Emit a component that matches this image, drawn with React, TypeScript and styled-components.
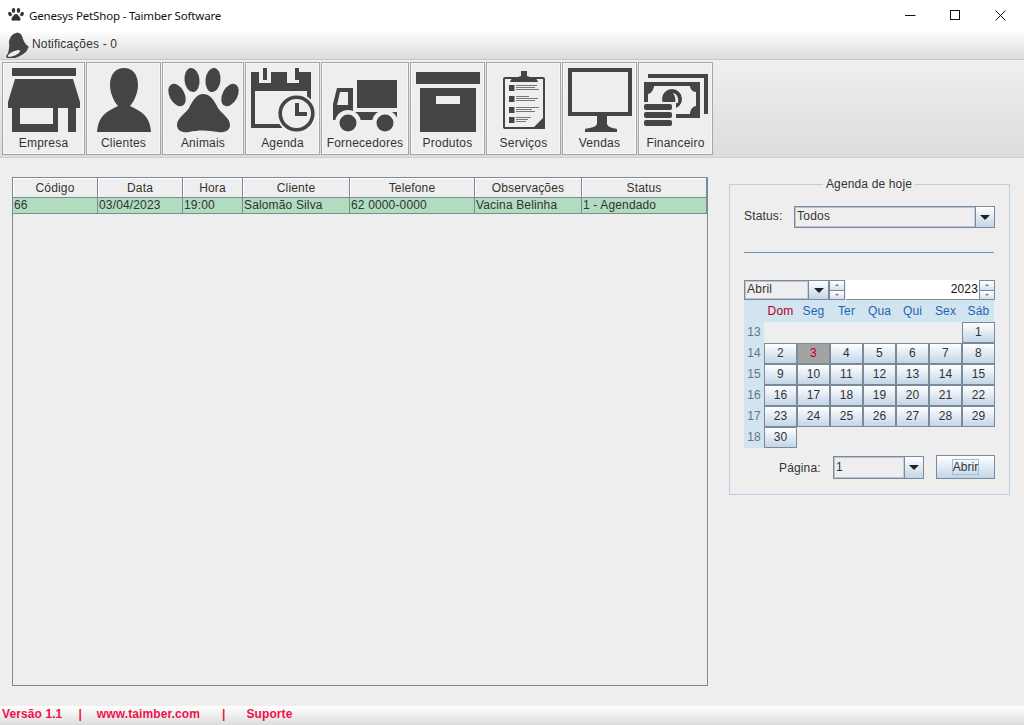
import React from "react";
import styled, { createGlobalStyle } from "styled-components";

const Global = createGlobalStyle`
  html, body { margin: 0; padding: 0; background: #eeeeee; }
  * { box-sizing: border-box; }
  body { font-family: "Liberation Sans", Arial, sans-serif; font-size: 12px; color: #333; letter-spacing: .15px; }
`;

const Page = styled.div`
  width: 1024px; height: 725px; display: flex; flex-direction: column; overflow: hidden; background: #eeeeee;
`;
const TitleBar = styled.header`
  height: 30px; flex: none; background: #fff; display: flex; align-items: center; padding-left: 8px;
`;
const TitleText = styled.span`
  font-family: "Noto Sans", "Open Sans", sans-serif; font-size: 11.5px; letter-spacing: -.17px; color: #111; margin-left: 5px; flex: 1;
`;
const WinControls = styled.div`
  display: flex; width: 136px; height: 30px; padding-right: 1px;
`;
const WinButton = styled.div`
  width: 45px; height: 30px; display: flex; align-items: center; justify-content: center;
`;
const NotifBar = styled.div`
  height: 30px; flex: none; display: flex; align-items: center; padding-left: 5px; gap: 2px;
  background: linear-gradient(#ffffff, #dcdcdc); border-bottom: 1px solid #c8c8c8; color: #333;
`;
const NotifText = styled.span`
  margin-bottom: 2px;
`;
const Toolbar = styled.nav`
  height: 98px; flex: none; display: flex; gap: 1px; padding: 2px 0 0 2px;
  background: linear-gradient(#efefef, #dcdcdc); border-bottom: 1px solid #cfcfcf;
`;
const ToolButton = styled.button<{ $w: number }>`
  width: ${p => p.$w}px; height: 93px; padding: 3px 0 0; margin: 0; flex: none;
  display: flex; flex-direction: column; align-items: center;
  background: #eeeeee; border: 1px solid #a6a6a6; box-shadow: inset 0 0 0 1px #f8f8f8;
  font: 12px "Liberation Sans", Arial, sans-serif; color: #333; letter-spacing: .22px;
`;
const ToolIcon = styled.svg`
  display: block; flex: none; fill: #444;
`;
const ToolLabel = styled.span`
  line-height: 15px;
`;
const Main = styled.main`
  flex: 1; min-height: 0; display: flex; align-items: flex-start; padding: 19px 0 0 12px;
`;
const TableBox = styled.section`
  width: 696px; height: 509px; border: 1px solid #7a8a99; flex: none;
`;
const Grid = styled.div`
  display: grid; grid-template-columns: 85px 85px 60px 107px 125px 107px 125px;
`;
const HeadCell = styled.div`
  height: 20px; line-height: 21px; text-align: center; background: #eeeeee; color: #333;
  border-right: 1px solid #7a8a99; border-bottom: 1px solid #7a8a99;
  box-shadow: inset 1px 1px 0 #fff;
`;
const BodyCell = styled.div`
  height: 16px; line-height: 15px; padding-left: 1px; background: #b1dcc0; color: #333; white-space: nowrap;
  border-right: 1px solid #7a8a99; border-bottom: 1px solid #7a8a99;
`;
const Panel = styled.fieldset`
  width: 281px; height: 318px; flex: none; margin: 0 0 0 21px; padding: 15px 15px 0 14px;
  border: 1px solid #b8cfe5; min-width: 0;
`;
const Legend = styled.legend`
  margin: 0 auto; padding: 0 3px; line-height: 14px; color: #333; height: 14px;
`;
const Row = styled.div`
  display: flex; align-items: center;
`;
const FieldLabel = styled.label<{ $w: number; $lift?: boolean }>`
  width: ${p => p.$w}px; flex: none; color: #333;
  ${p => p.$lift ? "margin-bottom: 3px;" : ""}
`;
const Combo = styled.div<{ $w: number; $h: number }>`
  width: ${p => p.$w}px; height: ${p => p.$h}px; flex: none; display: flex;
  border: 1px solid #7a8a99; background: #eeeeee;
`;
const ComboValue = styled.div`
  flex: 1; min-width: 0; display: flex; align-items: center; padding: 0 0 2px 1px; color: #333;
  border: 1px solid #b8c4d0; border-right-color: #c4ced8; letter-spacing: .25px;
`;
const ComboArrow = styled.div<{ $w: number }>`
  width: ${p => p.$w}px; flex: none; display: flex; align-items: center; justify-content: center;
  background: linear-gradient(#ffffff, #c3d5e8); border-left: 1px solid #7a8a99;
  &::after {
    content: ""; border-left: 5px solid transparent; border-right: 5px solid transparent;
    border-top: 5px solid #222;
  }
`;
const Separator = styled.hr`
  margin: 24px 0 27px; height: 1px; border: 0; background: #6f8fbf;
`;
const Spinner = styled.div`
  width: 16px; height: 20px; flex: none; display: flex; flex-direction: column;
  border: 1px solid #7a8a99;
`;
const SpinPart = styled.div<{ $up?: boolean }>`
  flex: 1; display: flex; align-items: center; justify-content: center;
  background: linear-gradient(#ffffff, #d5e0ec);
  ${p => p.$up ? "border-bottom: 1px solid #7a8a99;" : ""}
  &::after {
    content: ""; border-left: 2px solid transparent; border-right: 2px solid transparent;
    ${p => p.$up ? "border-bottom: 2px solid #777;" : "border-top: 2px solid #777;"}
  }
`;
const YearField = styled.div`
  width: 133px; height: 20px; flex: none; margin-left: 1px; background: #fff; color: #111;
  text-align: right; line-height: 18px; padding-right: 1px; border-bottom: 1px solid #7a8a99;
`;
const CalHead = styled.div`
  display: grid; grid-template-columns: 20px repeat(7, 33px); height: 22px; background: #d1e4ef; align-items: center;
`;
const DayName = styled.span<{ $sun?: boolean }>`
  text-align: center; color: ${p => p.$sun ? "#b00028" : "#1c66b0"};
`;
const CalBody = styled.div`
  display: grid; grid-template-columns: 20px repeat(7, 33px); grid-auto-rows: 21px;
`;
const WeekNum = styled.div`
  background: #d1e4ef; color: #5c7c7c; text-align: center; line-height: 21px;
`;
const DayButton = styled.div<{ $today?: boolean }>`
  border: 1px solid #7a8a99; text-align: center; line-height: 18px;
  background: ${p => p.$today ? "#a3a3a3" : "linear-gradient(#ffffff, #c3d5e8)"};
  color: ${p => p.$today ? "#c00020" : "#333"};
`;
const PageRow = styled(Row)`
  margin-top: 8px; padding-left: 35px;
`;
const OpenButton = styled.button`
  width: 59px; height: 24px; margin: -1px 0 0 12px; padding: 0; flex: none;
  display: flex; align-items: center; justify-content: center;
  border: 1px solid #7a8a99; background: linear-gradient(#ffffff, #c3d5e8);
  font: 12px "Liberation Sans", Arial, sans-serif; color: #333;
`;
const Focus = styled.span`
  border: 1px solid #a3bdd8; line-height: 14px; padding: 0;
`;
const Footer = styled.footer`
  height: 19px; flex: none; display: flex; align-items: center; padding: 0 0 3px 2px;
  background: linear-gradient(#ffffff, #dddddd);
  font-weight: 700; color: #f0104a; letter-spacing: .1px;
`;
const FootItem = styled.span<{ $gap?: number }>`
  margin-left: ${p => p.$gap ?? 0}px;
`;

const Icon = ({ x, w, children }: { x: number; w: number; children: React.ReactNode }) => (
  <ToolIcon width={w} height={70} viewBox={`${x} 66 ${w} 70`}>{children}</ToolIcon>
);

const tools: { label: string; x: number; w: number; art: React.ReactNode }[] = [
  { label: "Empresa", x: 2, w: 83, art: (
    <>
      <rect x="12" y="68" width="64" height="8" />
      <path d="M15 79H73L80 102V108H8V102Z" />
      <path fillRule="evenodd" d="M12 108H76V132H68V108H58V132H12ZM20 108V124H53V108Z" />
    </>) },
  { label: "Clientes", x: 86, w: 75, art: (
    <>
      <path d="M124 68C133 68 138 75 138 85C138 94 133 103 130 106L134 108H114L118 106C115 103 110 94 110 85C110 75 115 68 124 68Z" />
      <path d="M97 132C98 120 102 114 114 108H134C146 114 150 120 151 132Z" />
    </>) },
  { label: "Animais", x: 162, w: 82, art: (
    <>
      <ellipse cx="192" cy="80" rx="7.5" ry="12" transform="rotate(-6 192 80)" />
      <ellipse cx="213" cy="80" rx="7.5" ry="12" transform="rotate(6 213 80)" />
      <ellipse cx="177" cy="95" rx="7.5" ry="12" transform="rotate(-28 177 95)" />
      <ellipse cx="230" cy="95" rx="7.5" ry="12" transform="rotate(28 230 95)" />
      <path d="M203 94C210 94 214 100 218 108C222 114 230 118 230 125C230 131 224 133 218 132C208 130 198 130 189 132C183 133 177 131 177 125C177 118 185 114 189 108C193 100 197 94 203 94Z" />
    </>) },
  { label: "Agenda", x: 245, w: 75, art: (
    <>
      <path fillRule="evenodd" d="M251 72H259V83H271V72H287V83H299V72H311V100H307V91H255V124H282V128H251Z" />
      <rect x="263" y="68" width="4" height="12" />
      <rect x="295" y="68" width="4" height="12" />
      <circle cx="296.5" cy="113.5" r="20" fill="#eee" />
      <circle cx="296.5" cy="113.5" r="16.3" fill="none" stroke="#444" strokeWidth="3.6" />
      <path d="M295 103H299V112H307V116H295Z" />
    </>) },
  { label: "Fornecedores", x: 321, w: 88, art: (
    <>
      <rect x="357" y="80" width="40" height="28" />
      <path fillRule="evenodd" d="M337 88H353V120H333V104ZM340 92L337 105H348V92Z" />
      <rect x="353" y="112" width="44" height="8" />
      <circle cx="348" cy="123" r="13" fill="#eee" />
      <circle cx="385" cy="123" r="13" fill="#eee" />
      <circle cx="348" cy="123" r="8.5" />
      <circle cx="385" cy="123" r="8.5" />
    </>) },
  { label: "Produtos", x: 410, w: 75, art: (
    <>
      <rect x="416" y="72" width="64" height="12" />
      <path fillRule="evenodd" d="M420 88H476V132H420ZM436 96V104H460V96Z" />
    </>) },
  { label: "Serviços", x: 486, w: 75, art: (
    <>
      <path fill="#eee" stroke="#444" strokeWidth="2" d="M505 78H543Q544 78 544 79V128H505Q504 128 504 127V79Q504 78 505 78Z" />
      <path d="M510 82Q511 78 515 78L521 76V71H527V76L533 78Q537 78 538 82Z" />
      <path d="M545 116V129H532Z" />
      <g fill="#444">
        <rect x="509" y="85" width="5.500" height="6" />
        <rect x="509" y="96" width="5.500" height="6" />
        <rect x="509" y="107" width="5.500" height="6" />
        <rect x="509" y="117" width="5.500" height="6" />
      </g>
      <g stroke="#777" strokeWidth="1">
        <path d="M516 85.500H537M516 87.500H535M516 89.500H539" />
        <path d="M516 96.500H529M516 98.500H538M516 100.500H535" />
        <path d="M516 107.500H539M516 109.500H532M516 111.500H535" />
        <path d="M516 117.500H531M516 119.500H528M516 121.500H526" />
      </g>
    </>) },
  { label: "Vendas", x: 562, w: 75, art: (
    <>
      <path fillRule="evenodd" d="M568 68H632V116H568ZM572 72V112H628V72Z" />
      <path d="M597 116H607V124C608 127 612 128 617 129V132H585V129C590 128 596 127 597 124Z" />
    </>) },
  { label: "Financeiro", x: 638, w: 75, art: (
    <>
      <path d="M648 74H708V114H704V78H648Z" />
      <path fillRule="evenodd" d="M644 82H700V118H676V114H690C690 110 693 106 696 106V92C693 92 690 89 690 86H654C654 89 651 94 648 94V104H644Z" />
      <circle cx="672" cy="99" r="10" />
      <path d="M673 93C677 94 679 98 678 103L675 103C676 99 675 96 673 93Z" fill="#eee" />
      <rect x="642" y="102" width="34" height="20" fill="#eee" />
      <rect x="644" y="104" width="28" height="6" rx="2" />
      <rect x="644" y="112" width="28" height="6" rx="2" />
      <rect x="644" y="120" width="28" height="6" rx="2" />
    </>) },
];

const cols = ["Código", "Data", "Hora", "Cliente", "Telefone", "Observações", "Status"];
const row = ["66", "03/04/2023", "19:00", "Salomão Silva", "62 0000-0000", "Vacina Belinha", "1 - Agendado"];
const days = ["Dom", "Seg", "Ter", "Qua", "Qui", "Sex", "Sáb"];
const weeks: (number | null)[][] = [
  [null, null, null, null, null, null, 1],
  [2, 3, 4, 5, 6, 7, 8],
  [9, 10, 11, 12, 13, 14, 15],
  [16, 17, 18, 19, 20, 21, 22],
  [23, 24, 25, 26, 27, 28, 29],
  [30, null, null, null, null, null, null],
];

export default function App() {
  return (
    <Page>
      <Global />
      <TitleBar>
        <svg width="16" height="14" viewBox="0 0 16 14" fill="#333">
          <ellipse cx="5.500" cy="2.500" rx="1.700" ry="2.400" />
          <ellipse cx="10.500" cy="2.500" rx="1.700" ry="2.400" />
          <ellipse cx="2" cy="6" rx="1.700" ry="2.300" transform="rotate(-25 2 6)" />
          <ellipse cx="14" cy="6" rx="1.700" ry="2.300" transform="rotate(25 14 6)" />
          <path d="M8 6C10 6 10.500 8 12 9.500C13 11 12.500 13 10.500 12.700C9 12.300 7 12.300 5.500 12.700C3.500 13 3 11 4 9.500C5.500 8 6 6 8 6Z" />
        </svg>
        <TitleText>Genesys PetShop - Taimber Software</TitleText>
        <WinControls>
          <WinButton>
            <svg width="11" height="11" viewBox="0 0 11 11"><path d="M0 5.500H10.500" stroke="#111" /></svg>
          </WinButton>
          <WinButton>
            <svg width="11" height="11" viewBox="0 0 11 11"><rect x=".5" y=".5" width="9" height="9" fill="none" stroke="#111" /></svg>
          </WinButton>
          <WinButton>
            <svg width="11" height="11" viewBox="0 0 11 11"><path d="M.5 .5L10.500 10.500M10.500 .5L.5 10.500" stroke="#111" /></svg>
          </WinButton>
        </WinControls>
      </TitleBar>
      <NotifBar>
        <svg width="25" height="26" viewBox="0 0 25 26" fill="#444">
          <path d="M11 1C15 0 17 3 18 7C19 10 21 13 24 15C20 19 10 23 3 23C3 19 5 15 4 11C4 6 7 2 11 1Z" />
          <ellipse cx="12" cy="20.500" rx="11.500" ry="4.500" transform="rotate(-24 12 20.500)" />
          <ellipse cx="9" cy="21.500" rx="6.500" ry="2.300" transform="rotate(-24 9 21.500)" fill="#eee" />
        </svg>
        <NotifText>Notificações - 0</NotifText>
      </NotifBar>
      <Toolbar>
        {tools.map(t => (
          <ToolButton key={t.label} $w={t.w}>
            <Icon x={t.x} w={t.w}>{t.art}</Icon>
            <ToolLabel>{t.label}</ToolLabel>
          </ToolButton>
        ))}
      </Toolbar>
      <Main>
        <TableBox>
          <Grid>
            {cols.map(c => <HeadCell key={c}>{c}</HeadCell>)}
            {row.map(c => <BodyCell key={c}>{c}</BodyCell>)}
          </Grid>
        </TableBox>
        <Panel>
          <Legend>Agenda de hoje</Legend>
          <Row>
            <FieldLabel $w={50} $lift>Status:</FieldLabel>
            <Combo $w={201} $h={22}>
              <ComboValue>Todos</ComboValue>
              <ComboArrow $w={19} />
            </Combo>
          </Row>
          <Separator />
          <Row>
            <Combo $w={85} $h={20}>
              <ComboValue>Abril</ComboValue>
              <ComboArrow $w={20} />
            </Combo>
            <Spinner><SpinPart $up /><SpinPart /></Spinner>
            <YearField>2023</YearField>
            <Spinner><SpinPart $up /><SpinPart /></Spinner>
          </Row>
          <CalHead>
            <span />
            {days.map((d, i) => <DayName key={d} $sun={i === 0}>{d}</DayName>)}
          </CalHead>
          <CalBody>
            {weeks.map((w, i) => (
              <React.Fragment key={i}>
                <WeekNum>{13 + i}</WeekNum>
                {w.map((d, j) => d === null
                  ? <span key={j} />
                  : <DayButton key={j} $today={d === 3}>{d}</DayButton>)}
              </React.Fragment>
            ))}
          </CalBody>
          <PageRow>
            <FieldLabel $w={54}>Página:</FieldLabel>
            <Combo $w={91} $h={23}>
              <ComboValue>1</ComboValue>
              <ComboArrow $w={19} />
            </Combo>
            <OpenButton><Focus>Abrir</Focus></OpenButton>
          </PageRow>
        </Panel>
      </Main>
      <Footer>
        <FootItem>Versão 1.1</FootItem>
        <FootItem $gap={16}>|</FootItem>
        <FootItem $gap={15}>www.taimber.com</FootItem>
        <FootItem $gap={22}>|</FootItem>
        <FootItem $gap={21}>Suporte</FootItem>
      </Footer>
    </Page>
  );
}
